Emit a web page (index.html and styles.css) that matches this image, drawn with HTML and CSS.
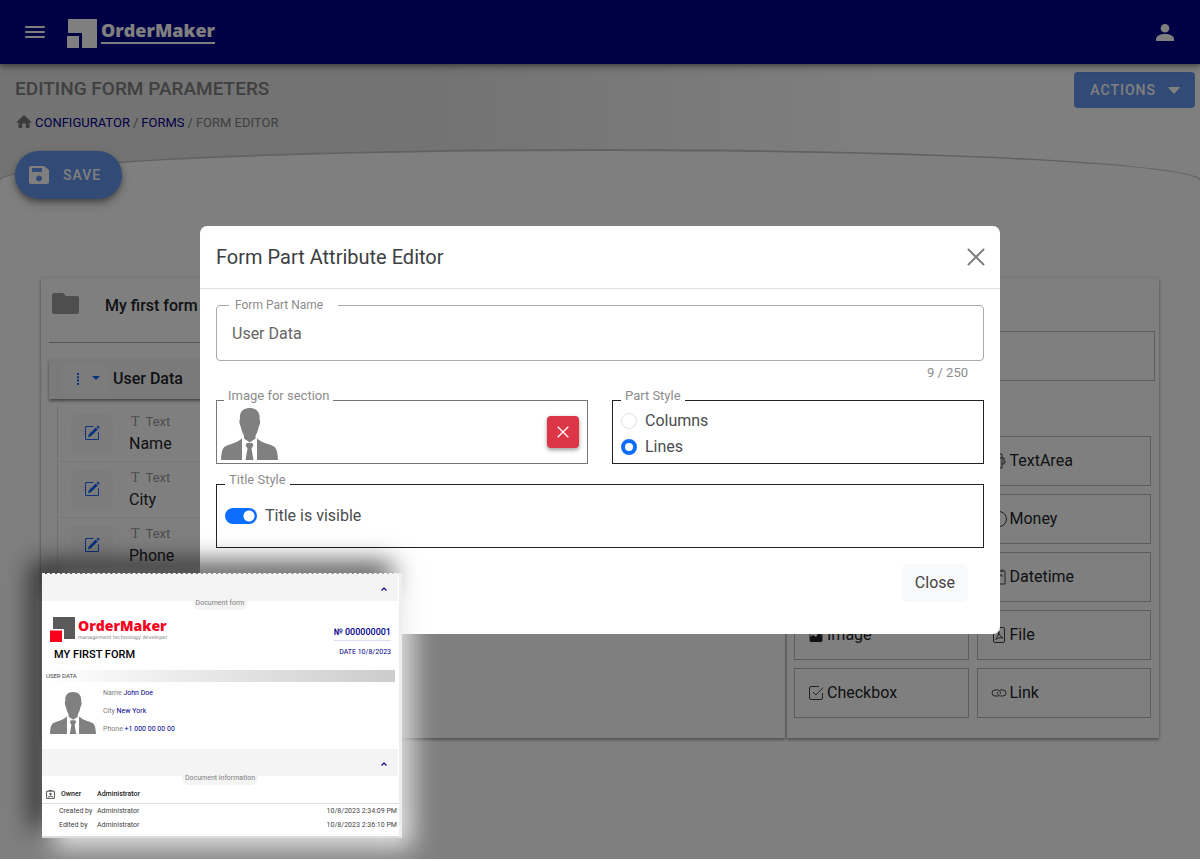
FILE: index.html
```html
<!DOCTYPE html>
<html lang="en">
<head>
<meta charset="utf-8">
<title>Form editor</title>
<link rel="stylesheet" href="styles.css">
</head>
<body>
<svg class="defs" aria-hidden="true">
  <symbol id="person" viewBox="0 0 57 52">
    <path d="M28.500 0C22 0 18.500 4 19 10c0 2-.8 2-.6 4.500.2 2 1 3 1.600 5 .6 4 2 6 3 8v3l5.800 4 5.700-4v-3c1.200-2 2.400-4 3-8 .7-2 1.500-3 1.600-5 .2-2.500-.6-2.500-.5-4.500C39 4 35 0 28.500 0zM21 30c-3 4-10 5.500-16 8-3.500 1.500-4.500 5-5 14h21zM36 30c3 4 10 5.500 16 8 3.500 1.500 4.500 5 5 14H36zM26 35h5l1.500 2-2 3.500L32.500 52h-8l2-11.500-2-3.500z" fill="#808080"/>
  </symbol>
  <symbol id="edit" viewBox="0 0 16 16">
    <path d="M15.502 1.940a.5.5 0 0 1 0 .706L14.459 3.690l-2-2L13.502.646a.5.5 0 0 1 .707 0l1.293 1.293zm-1.750 2.456-2-2L4.939 9.210a.5.5 0 0 0-.121.196l-.805 2.414a.25.25 0 0 0 .316.316l2.414-.805a.5.5 0 0 0 .196-.12l6.813-6.814z"/>
    <path d="M1 13.500A1.500 1.500 0 0 0 2.500 15h11a1.500 1.500 0 0 0 1.500-1.500v-6a.5.5 0 0 0-1 0v6a.5.5 0 0 1-.5.5h-11a.5.5 0 0 1-.5-.5v-11a.5.5 0 0 1 .5-.5H9a.5.5 0 0 0 0-1H2.500A1.500 1.500 0 0 0 1 2.500z"/>
  </symbol>
  <symbol id="up" viewBox="0 0 8 6"><path d="M1.500 4.500l2.500-2.500 2.500 2.500" fill="none" stroke="#00008b" stroke-width="1.100"/></symbol>
</svg>

<div class="app">
  <header class="topbar">
    <button class="plain" aria-label="Menu"><svg width="20" height="14" viewBox="0 0 20 14"><path d="M1 2h18M1 7h18M1 12h18" stroke="#fff" stroke-width="2" stroke-linecap="round"/></svg></button>
    <a class="brand" href="#">
      <svg width="31" height="30" viewBox="0 0 31 30"><path d="M1 0h29v29H15V14H1z" fill="#fff"/><path d="M0 17h12v12H0z" fill="#fff"/></svg>
      <span class="brand-name">OrderMaker</span>
    </a>
    <button class="plain account" aria-label="Account"><svg width="18" height="17" viewBox="0 0 18 17"><circle cx="9" cy="4.300" r="4.300" fill="#fff"/><path d="M0 17v-2c0-3 4-5 9-5s9 2 9 5v2z" fill="#fff"/></svg></button>
  </header>

  <section class="titleband">
    <div>
      <h1>EDITING FORM PARAMETERS</h1>
      <nav class="crumbs" aria-label="Breadcrumb">
        <svg width="16" height="16" viewBox="0 0 16 16"><path d="M8 0l8 7.500h-2.500V13H9.800V8.500H6.200V13H2.500V7.500H0z" fill="#777"/></svg>
        <a href="#">CONFIGURATOR</a><span>/</span><a href="#">FORMS</a><span>/</span><span class="current">FORM EDITOR</span>
      </nav>
    </div>
    <button class="actions">ACTIONS <svg width="12" height="7" viewBox="0 0 12 7"><path d="M1 0h10q1 0 .5 1L6.500 6.500H5.500L.5 1Q0 0 1 0z" fill="#fff"/></svg></button>
  </section>

  <main class="sheet">
    <button class="save"><svg width="20" height="18" viewBox="0 0 20 18"><path fill-rule="evenodd" d="M2 0h13l5 4v12q0 2-2 2H2q-2 0-2-2V2Q0 0 2 0zM3 2v4h10V2zm7 7.500a3 3 0 1 0 .01 0z" fill="#fff"/></svg>SAVE</button>

    <div class="board">
      <section class="formpane">
        <div class="formhead">
          <svg width="27" height="26" viewBox="0 0 27 26"><path d="M2 0h9l3 3h11q2 0 2 2v14q0 2-2 2H2q-2 0-2-2V2Q0 0 2 0z" fill="#9c9c9c"/></svg>
          <h2>My first form</h2>
        </div>
        <div class="parthead">
          <button class="partmenu" aria-label="Part menu"><svg width="24" height="12" viewBox="0 0 24 12"><path d="M1 0h2v2H1zM1 3.300h2v2H1zM1 6.600h2v2H1zM1 9.900h2v2H1zM16 3h8l-4 4z" fill="#1565ff"/></svg></button>
          <h3>User Data</h3>
        </div>
        <ul class="fields">
          <li><button class="edit" aria-label="Edit Name"><svg width="16" height="16"><use href="#edit"/></svg></button><div><small><i>T</i>Text</small>Name</div></li>
          <li><button class="edit" aria-label="Edit City"><svg width="16" height="16"><use href="#edit"/></svg></button><div><small><i>T</i>Text</small>City</div></li>
          <li><button class="edit" aria-label="Edit Phone"><svg width="16" height="16"><use href="#edit"/></svg></button><div><small><i>T</i>Text</small>Phone</div></li>
        </ul>
      </section>
      <section class="palette">
        <input class="search" type="text" aria-label="Search">
        <div class="tools">
          <button><svg viewBox="0 0 16 16"><path d="M2 1h9v4M2 1v14h9v-4M11 5v6M9 5h4v3h1v2h-2v2" class="ln"/></svg>TextArea</button>
          <button><svg viewBox="0 0 16 16"><circle cx="8" cy="8" r="7.500" class="ln"/></svg>Money</button>
          <button><svg viewBox="0 0 16 16"><path d="M1 2h13v13H1zM4 0v3M11 0v3M6 6h5v2" class="ln"/></svg>Datetime</button>
          <button class="lefttool"><svg viewBox="0 0 16 16"><path d="M2 2h12v12H2z" class="ln"/><path d="M2 10l3-2 3 2 3-5 3 4v5q0 1-1 1H3q-1 0-1-1z" fill="#212529"/></svg>Image</button>
          <button><svg viewBox="0 0 16 16"><path d="M4 .5h8q1.500 0 1.500 1.500v12q0 1.500-1.500 1.500H4q-1.500 0-1.500-1.500V2Q2.500.5 4 .5zM4.500 12.500C7 10 8 6 7.500 4c1 4 2 6 4.500 7-3-.8-5 0-7.500 1.500" class="ln"/></svg>File</button>
          <button class="lefttool"><svg viewBox="0 0 16 16"><path d="M14.500 8v5q0 1.500-1.500 1.500H3Q1.500 14.500 1.500 13V3Q1.500 1.500 3 1.500h8M5 7l3 3 7-7.500" class="ln"/></svg>Checkbox</button>
          <button><svg viewBox="0 0 16 16"><path d="M7 11H4a3 3 0 0 1 0-6h2.500a3 3 0 0 1 2.800 4M9 5h3a3 3 0 0 1 0 6H9.500a3 3 0 0 1-2.800-4" class="ln"/></svg>Link</button>
        </div>
      </section>
    </div>
  </main>
</div>

<div class="backdrop">
  <div class="modal" role="dialog" aria-labelledby="dlg">
    <div class="modal-head">
      <h2 id="dlg">Form Part Attribute Editor</h2>
      <button class="plain" aria-label="Close dialog"><svg width="18" height="18" viewBox="0 0 18 18"><path d="M1.500 1.500l15 15M16.500 1.500l-15 15" stroke="#7f7f7f" stroke-width="2" stroke-linecap="round"/></svg></button>
    </div>
    <div class="modal-body">
      <fieldset class="textfield">
        <legend><label for="part">Form Part Name</label></legend>
        <input id="part" type="text" value="User Data">
      </fieldset>
      <div class="counter">9 / 250</div>
      <div class="pair">
        <fieldset class="box imgbox">
          <legend>Image for section</legend>
          <div class="content imgrow">
            <svg width="57" height="52" role="img" aria-label="Person"><use href="#person"/></svg>
            <button class="remove" aria-label="Remove image"><svg width="12" height="12" viewBox="0 0 12 12"><path d="M.7.7l10.600 10.600M11.300.7L.7 11.300" stroke="#fff" stroke-width="1.300"/></svg></button>
          </div>
        </fieldset>
        <fieldset class="box dark">
          <legend>Part Style</legend>
          <div class="content">
            <label class="choice"><input type="radio" name="style">Columns</label>
            <label class="choice"><input type="radio" name="style" checked>Lines</label>
          </div>
        </fieldset>
      </div>
      <fieldset class="box dark titlebox">
        <legend>Title Style</legend>
        <div class="content">
          <label class="choice"><input class="switch" type="checkbox" role="switch" checked>Title is visible</label>
        </div>
      </fieldset>
      <div class="modal-foot"><button class="close">Close</button></div>
    </div>
  </div>
</div>

<aside class="preview">
  <div class="strip"><svg width="8" height="6"><use href="#up"/></svg><span class="tab">Document form</span></div>
  <div class="doc">
    <div class="doctop">
      <div>
        <div class="doclogo">
          <svg width="26" height="26" viewBox="0 0 26 26"><path d="M3 0h22v22H14V12H3z" fill="#5a5a5a"/><path d="M0 13.500h12V25H0z" fill="#f9001d"/></svg>
          <div><b>OrderMaker</b><span>management technology developer</span></div>
        </div>
        <h4>MY FIRST FORM</h4>
      </div>
      <div class="docnum"><b>№ 000000001</b><span>DATE 10/8/2023</span></div>
    </div>
    <div class="docbar">USER DATA</div>
    <div class="docuser">
      <svg width="46" height="42" role="img" aria-label="Person"><use href="#person"/></svg>
      <div><p>Name <em>John Doe</em></p><p>City <em>New York</em></p><p>Phone <em>+1 000 00 00 00</em></p></div>
    </div>
  </div>
  <div class="strip"><svg width="8" height="6"><use href="#up"/></svg><span class="tab">Document information</span></div>
  <table class="info">
    <tr class="owner"><td><div><svg width="9" height="9" viewBox="0 0 9 9"><path d="M.6 1.200h7.800v7.200H.6zM3 1.200V.4h3v.8M2 7q2.500-2 5 0" fill="none" stroke="#555"/><circle cx="4.500" cy="4" r="1.200" fill="#555"/></svg>Owner</div></td><td>Administrator</td><td></td></tr>
    <tr><td>Created by</td><td>Administrator</td><td>10/8/2023 2:34:09 PM</td></tr>
    <tr><td>Edited by</td><td>Administrator</td><td>10/8/2023 2:36:10 PM</td></tr>
  </table>
</aside>
</body>
</html>
```
FILE: styles.css
```css
*{box-sizing:border-box}
body{margin:0;font-family:Roboto,sans-serif;font-size:16px;line-height:24px;color:#212529;background:#fff;min-height:100vh;position:relative;overflow-x:hidden}
h1,h2,h3,h4,p,ul{margin:0;padding:0}
button,input{font:inherit;color:inherit}
button{border:0;cursor:pointer}
svg{display:block;flex:none}
a{color:#00008b;text-decoration:none}
.defs{position:absolute;width:0;height:0}
.plain{background:none;padding:0}
.ln{fill:none;stroke:#444;stroke-width:1}

.app{min-height:calc(100vh - 2px);display:flex;flex-direction:column}
.topbar{height:64px;background:#00008b;display:flex;align-items:center;padding:0 26px 0 25px;position:relative;box-shadow:0 2px 4px rgba(0,0,0,.3),0 4px 8px rgba(0,0,0,.2)}
.brand{display:flex;gap:3px;margin-left:22px;padding-top:4px;color:#fff}
.brand-name{font:800 18px/22px "Open Sans",sans-serif;border-bottom:2px solid #fff;height:25px}
.account{margin-left:auto}
.titleband{display:flex;justify-content:space-between;align-items:flex-start;padding:8px 5px 0 15px;height:116px;margin-bottom:-31px;background:linear-gradient(90deg,#e6e6e6 35%,#fff 75%)}
h1{font-size:19px;line-height:34px;font-weight:500;color:#808080}
.crumbs{display:flex;align-items:center;gap:3px;font-size:13px;line-height:20px;margin-top:7px;padding-left:1px;color:#6c757d}
.crumbs .current{color:#808080}
.actions{display:flex;align-items:center;gap:12px;height:36px;padding:0 15px 0 16px;background:#6495ed;color:#fff;border-radius:4px;font-size:14px;font-weight:500;letter-spacing:1px}
.sheet{flex:1;background:#fff;border:2px solid #c4c4c4;border-bottom:0;border-radius:50% 50% 0 0/32px 32px 0 0;margin:0 -2px;padding:0 41px 40px}
.save{display:flex;align-items:center;gap:14px;height:48px;margin-left:-26px;padding:0 21px 0 14px;border-radius:24px;background:#6495ed;color:#fff;font-size:14px;font-weight:500;letter-spacing:1px;box-shadow:0 3px 5px rgba(0,0,0,.3),0 5px 12px rgba(0,0,0,.2)}
.board{display:grid;grid-template-columns:2fr 1fr;gap:2px;margin-top:79px;min-height:460px}
.formpane,.palette{box-shadow:0 2px 3px rgba(0,0,0,.35),0 0 3px rgba(0,0,0,.12)}
.formpane{padding:0 8px}
.formhead{display:flex;align-items:center;gap:26px;height:65px;padding:0 3px 8px;border-bottom:1px solid #aaa}
h2,h3{font-size:16px;font-weight:500}
.parthead{display:flex;align-items:center;gap:5px;height:40px;margin-top:16px;padding-left:13px;background:#f5f5f5;box-shadow:0 2px 3px rgba(0,0,0,.45)}
.partmenu{width:46px;height:32px;padding:0 8px 0 14px;background:#f8f9fa;border-radius:4px}
.fields{list-style:none;margin:7px 0 0 8px;border-left:1px solid #e4e4e4}
.fields li{display:flex;gap:16px;height:56px;padding:8px 0 0 13px;border-bottom:1px solid #f0f0f0}
.fields li>div{line-height:22px}
.fields small{display:block;font-size:13px;line-height:16px;color:#999;margin-bottom:3px}
.fields i{font:14px "Liberation Serif",serif;margin:0 6px 0 2px}
.edit{width:42px;height:38px;padding:0 13px;background:#f8f9fa;border-radius:6px;fill:#1565ff}
.palette{padding:53px 4px 20px 7px}
.search{display:block;width:100%;height:50px;border:1px solid #bbb;background:#fff;padding:0 12px}
.tools{display:grid;grid-template-columns:1fr 1fr;gap:8px;margin-top:55px;padding-right:4px}
.tools button{grid-column:2;display:flex;align-items:center;gap:3px;height:50px;padding:0 13px;border:1px solid #bbb;background:#fff}
.tools .lefttool{grid-column:1}
.tools svg{width:16px;height:16px}

.backdrop{position:absolute;inset:0 0 2px;background:rgba(0,0,0,.5);padding:226px 20px 0}
.modal{max-width:800px;margin:0 auto;background:#fff;border-radius:7px;color:#4a4d50}
.modal-head{display:flex;align-items:center;justify-content:space-between;height:63px;padding:0 15px 0 16px;border-bottom:1px solid #dee2e6}
.modal-head h2{font-size:20px;font-weight:400;color:#3c4043}
.modal-body{padding:8px 16px 32px}
fieldset{margin:0;min-width:0}
.textfield{border:1px solid #aaa;border-radius:4px;padding:0 15px;height:64px}
.textfield legend{font-size:12px;line-height:16px;color:#8c8c8c;padding:0 15px 0 6px;margin-left:-3px}
.textfield input{display:block;width:100%;border:0;padding:0;height:40px;outline:0;background:none;color:#666}
.counter{font-size:13px;line-height:24px;text-align:right;padding-right:16px;color:#8c8c8c}
.pair{display:grid;grid-template-columns:1fr 1fr;gap:24px;margin-top:3px}
.box{border:1px solid #777;padding:0 8px;height:76px}
.box legend{font-size:13px;line-height:16px;color:#8c8c8c;padding:0 4px 8px}
.content{margin-top:-4px}
.dark{border-color:#222}
.imgbox{padding-left:4px}
.imgbox legend{margin-left:3px}
.imgrow{display:flex;justify-content:space-between}
.remove{width:32px;height:32px;margin-top:8px;padding:0 10px;border-radius:4px;background:#dc3545;box-shadow:0 2px 4px rgba(0,0,0,.4)}
.choice{display:flex;align-items:center;gap:8px;line-height:26px}
.choice input{appearance:none;margin:0;width:16px;height:16px;border:1px solid #dee2e6;border-radius:50%;background:#fff}
.choice input:checked{border:4px solid #0d6efd}
.choice .switch{width:32px;border-radius:8px}
.choice .switch:checked{border:0;background:radial-gradient(circle at 24px 8px,#fff 5px,#0d6efd 6px)}
.titlebox{margin-top:8px}
.titlebox .choice{padding-top:11px}
.modal-foot{display:flex;justify-content:flex-end;padding:16px 16px 0}
.close{height:38px;padding:0 13px;border-radius:6px;background:#f8f9fa;color:#444}

.preview{position:absolute;left:42px;top:573px;width:360px;background:#fff;background-clip:padding-box;border-top:1px dashed #fff;border-right:3px solid #eee;border-bottom:2px solid #ddd;font-size:7px;line-height:14px;color:#444;box-shadow:10px 10px 24px rgba(255,255,255,.85),-10px -10px 24px rgba(0,0,0,.75);padding-bottom:4px}
.strip{position:relative;height:27px;background:#f4f4f4;margin-right:1px}
.strip svg{position:absolute;right:10px;top:12px}
.tab{position:absolute;left:50%;bottom:-9px;transform:translateX(-50%);line-height:14px;padding:0 3px;background:#f4f4f4;border-radius:0 0 7px 7px;color:#808080;white-space:nowrap}
.doctop{display:flex;justify-content:space-between;padding:16px 8px 0}
.doclogo{display:flex;gap:2px;height:29px}
.doclogo b{display:block;font:800 14px/18px "Open Sans",sans-serif;color:#f9001d}
.doclogo span{display:block;font:5px/4px "DejaVu Sans",sans-serif;color:#777}
.doc h4{font-size:11px;font-weight:500;line-height:18px;margin-left:4px;color:#000}
.docnum{color:#00008b;text-align:right;padding-top:7px}
.docnum b{display:block;font-size:9px;font-weight:500;border-bottom:1px solid #dde;line-height:16px}
.docnum span{display:block;line-height:22px}
.docbar{margin:6px 4px 0 2px;padding-left:2px;font-size:6px;line-height:12px;background:linear-gradient(90deg,#fff,#ccc)}
.docuser{display:flex;gap:7px;padding:2px 8px 11px}
.docuser svg{margin-top:8px}
.docuser p{line-height:18px;color:#808080}
.docuser em{font-style:normal;color:#00008b}
.info{width:100%;border-collapse:collapse;margin-top:10px}
.info td{padding:0}
.info td:first-child{width:55px;padding-left:17px}
.info td:last-child{text-align:right;padding-right:2px}
.info .owner td{font-weight:500;line-height:16px;color:#222;border-bottom:1px solid #ddd;padding-bottom:1px}
.info .owner td:first-child{padding-left:4px}
.owner div{display:flex;align-items:center;gap:6px}
```
